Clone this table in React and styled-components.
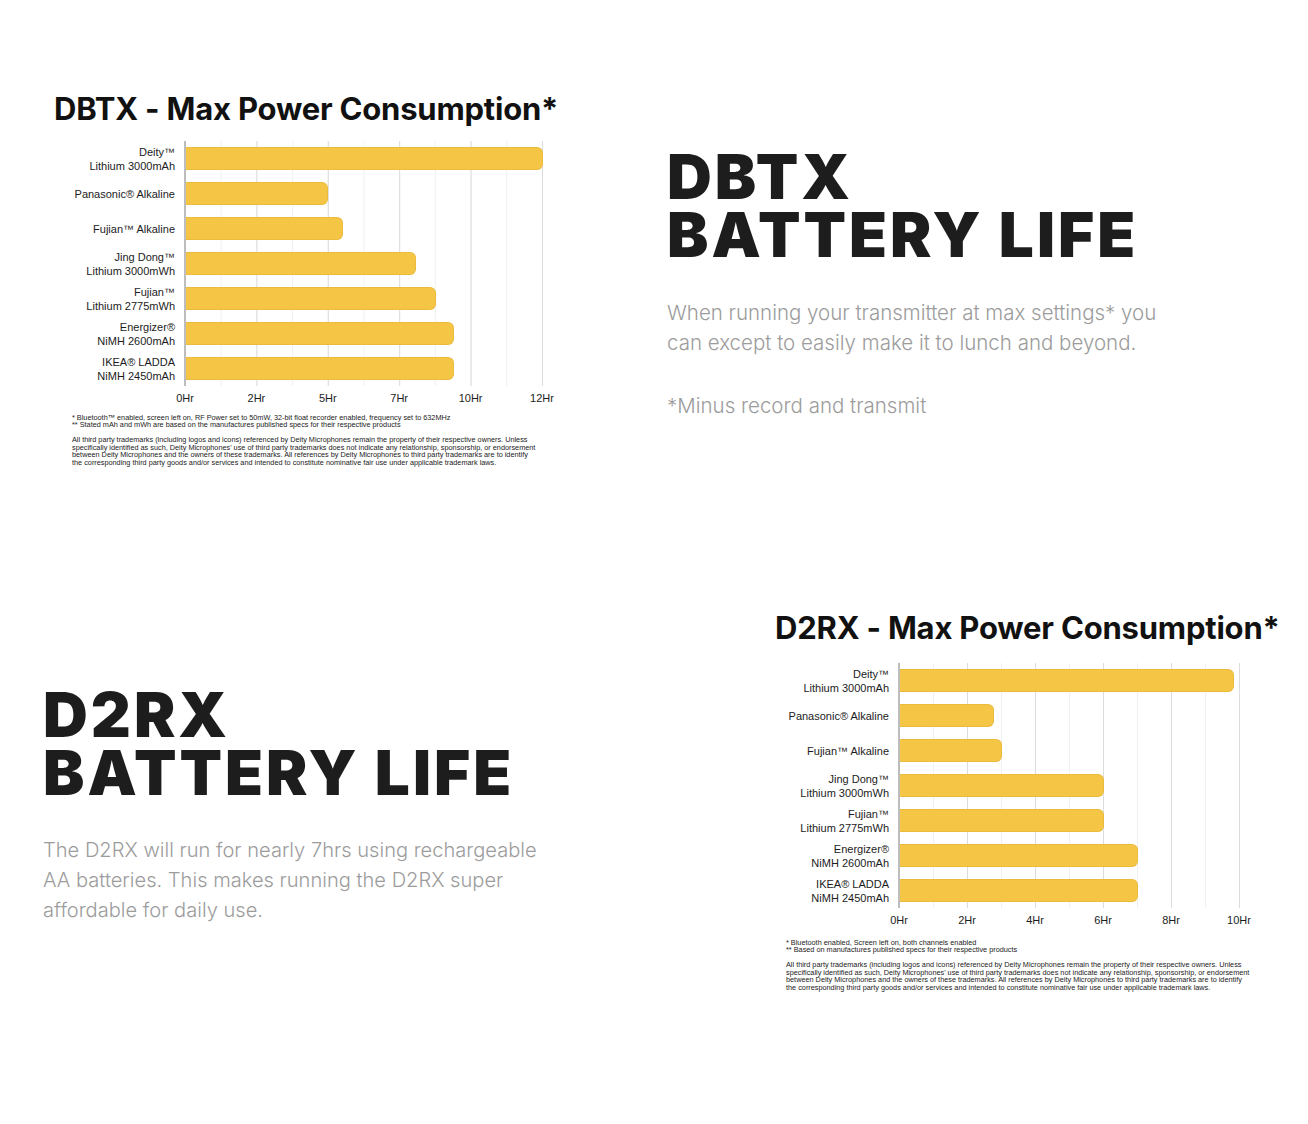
import React from 'react'
import styled, { createGlobalStyle } from 'styled-components'

const GlobalStyle = createGlobalStyle`
  body {
    margin: 0;
    background: #fff;
    font-family: Inter, "Liberation Sans", sans-serif;
  }
`

const Page = styled.div`
  width: 1308px;
  height: 1124px;
  background: #fff;
  overflow: hidden;
`

const Section = styled.section`
  height: ${props => props.h}px;
  display: grid;
  grid-template-columns: 654px 654px;
  align-items: start;
`

const Cell = styled.div`
  padding-left: ${props => props.left}px;
  padding-top: ${props => props.top}px;
`

const ChartTitle = styled.h2`
  margin: 0 0 ${props => props.gap}px;
  font-family: Inter, "Liberation Sans", sans-serif;
  font-weight: 700;
  font-size: 31px;
  line-height: 36px;
  color: #111;
  letter-spacing: -0.2px;
  white-space: nowrap;
`

const Row = styled.div`
  display: grid;
  grid-template-columns: ${props => props.labelW}px ${props => props.plotW}px;
  column-gap: 10px;
`

const Label = styled.div`
  align-self: center;
  text-align: right;
  font-family: "Liberation Sans", Arial, sans-serif;
  font-size: 11px;
  line-height: 14px;
  color: #1c1c1c;
  white-space: nowrap;
`

const Track = styled.div`
  height: 35px;
  box-sizing: border-box;
  padding: 6px 0;
  border-left: 2px solid #bdbdbd;
  margin-left: -1px;
  background-image:
    linear-gradient(to right, #dcdcdc 1px, transparent 1px),
    linear-gradient(to right, #f0f0f0 1px, transparent 1px);
  background-size: ${props => props.major}px 100%, ${props => props.major / 2}px 100%;
  background-position: -1px 0, -1px 0;
`

const Bar = styled.div`
  height: 23px;
  box-sizing: border-box;
  background: #f5c646;
  border: 1px solid #ebbb3d;
  border-left: none;
  border-radius: 0 6px 6px 0;
`

const TickRow = styled.div`
  display: flex;
  margin-top: 5px;
  margin-left: ${props => -props.major / 2}px;
`

const Tick = styled.div`
  width: ${props => props.w}px;
  flex: none;
  text-align: center;
  font-family: "Liberation Sans", Arial, sans-serif;
  font-size: 11px;
  line-height: 14px;
  color: #1c1c1c;
`

const Notes = styled.div`
  margin-top: ${props => props.top}px;
  padding-left: ${props => props.indent}px;
  font-family: "Liberation Sans", Arial, sans-serif;
  font-size: 7.3px;
  line-height: 7.4px;
  color: #222;
  white-space: nowrap;
`

const NoteGap = styled.div`
  height: 7.6px;
`

const Heading = styled.h1`
  margin: ${props => props.top}px 0 0;
  font-family: Inter, "Liberation Sans", sans-serif;
  font-weight: 900;
  font-size: 62px;
  line-height: 58px;
  letter-spacing: 3px;
  color: #1d1d1d;
  white-space: nowrap;
`

const Copy = styled.p`
  margin: ${props => props.top}px 0 0;
  font-family: Inter, "Liberation Sans", sans-serif;
  font-weight: 300;
  font-size: ${props => props.size || 20.5}px;
  line-height: 30px;
  color: #9c9c9c;
  white-space: nowrap;
`

const DISCLAIMER = [
  'All third party trademarks (including logos and icons) referenced by Deity Microphones remain the property of their respective owners. Unless',
  "specifically identified as such, Deity Microphones' use of third party trademarks does not indicate any relationship, sponsorship, or endorsement",
  'between Deity Microphones and the owners of these trademarks. All references by Deity Microphones to third party trademarks are to identify',
  'the corresponding third party goods and/or services and intended to constitute nominative fair use under applicable trademark laws.'
]

const dbtx = {
  title: 'DBTX - Max Power Consumption*',
  titleGap: 14,
  labelW: 121,
  plotW: 364,
  major: 71.4,
  unit: 357 / 12,
  ticks: ['0Hr', '2Hr', '5Hr', '7Hr', '10Hr', '12Hr'],
  rows: [
    ['Deity™', 'Lithium 3000mAh', 12],
    ['Panasonic® Alkaline', null, 4.78],
    ['Fujian™ Alkaline', null, 5.28],
    ['Jing Dong™', 'Lithium 3000mWh', 7.73],
    ['Fujian™', 'Lithium 2775mWh', 8.4],
    ['Energizer®', 'NiMH 2600mAh', 9.0],
    ['IKEA® LADDA', 'NiMH 2450mAh', 9.0]
  ],
  notes: [
    '* Bluetooth™ enabled, screen left on, RF Power set to 50mW, 32-bit float recorder enabled, frequency set to 632MHz',
    '** Stated mAh and mWh are based on the manufactures published specs for their respective products'
  ],
  notesTop: 9,
  indent: 18
}

const d2rx = {
  title: 'D2RX - Max Power Consumption*',
  titleGap: 17,
  labelW: 114,
  plotW: 346,
  major: 68,
  unit: 34,
  ticks: ['0Hr', '2Hr', '4Hr', '6Hr', '8Hr', '10Hr'],
  rows: [
    ['Deity™', 'Lithium 3000mAh', 9.82],
    ['Panasonic® Alkaline', null, 2.76],
    ['Fujian™ Alkaline', null, 3.0],
    ['Jing Dong™', 'Lithium 3000mWh', 6.0],
    ['Fujian™', 'Lithium 2775mWh', 6.0],
    ['Energizer®', 'NiMH 2600mAh', 7.0],
    ['IKEA® LADDA', 'NiMH 2450mAh', 7.0]
  ],
  notes: [
    '* Bluetooth enabled, Screen left on, both channels enabled',
    '** Based on manufactures published specs for their respective products'
  ],
  notesTop: 12,
  indent: 11
}

function Chart({ data }) {
  return (
    <div>
      <ChartTitle gap={data.titleGap}>{data.title}</ChartTitle>
      {data.rows.map(([a, b, v]) => (
        <Row key={a} labelW={data.labelW} plotW={data.plotW}>
          <Label>
            {a}
            {b && <br />}
            {b}
          </Label>
          <Track major={data.major}>
            <Bar style={{ width: v * data.unit }} />
          </Track>
        </Row>
      ))}
      <Row labelW={data.labelW} plotW={data.plotW}>
        <div />
        <TickRow major={data.major}>
          {data.ticks.map(t => (
            <Tick key={t} w={data.major}>{t}</Tick>
          ))}
        </TickRow>
      </Row>
      <Notes top={data.notesTop} indent={data.indent}>
        {data.notes.map(n => <div key={n}>{n}</div>)}
        <NoteGap />
        {DISCLAIMER.map(n => <div key={n}>{n}</div>)}
      </Notes>
    </div>
  )
}

export default function App() {
  return (
    <Page>
      <GlobalStyle />
      <Section h={520}>
        <Cell left={54} top={91}>
          <Chart data={dbtx} />
        </Cell>
        <Cell left={13} top={91}>
          <Heading top={57}>DBTX<br />BATTERY LIFE</Heading>
          <Copy top={34}>
            When running your transmitter at max settings* you<br />
            can except to easily make it to lunch and beyond.
          </Copy>
          <Copy top={33}>*Minus record and transmit</Copy>
        </Cell>
      </Section>
      <Section h={604}>
        <Cell left={43} top={166}>
          <Heading top={0}>D2RX<br />BATTERY LIFE</Heading>
          <Copy top={33} size={20.1}>
            The D2RX will run for nearly 7hrs using rechargeable<br />
            AA batteries. This makes running the D2RX super<br />
            affordable for daily use.
          </Copy>
        </Cell>
        <Cell left={121} top={90}>
          <Chart data={d2rx} />
        </Cell>
      </Section>
    </Page>
  )
}
